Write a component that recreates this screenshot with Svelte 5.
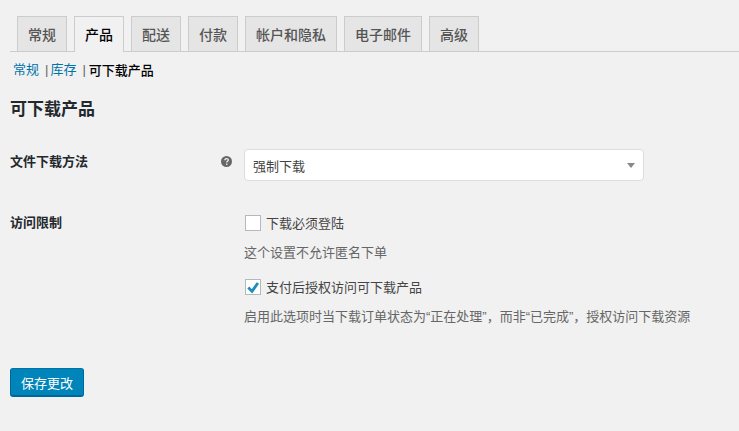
<script lang="ts">
    const tabs = ["常规", "产品", "配送", "付款", "帐户和隐私", "电子邮件", "高级"];
    const active = "产品";

    let requireLogin = $state(false);
    let grantAfterPayment = $state(true);
</script>

<div class="wrap">
    <nav class="tabs">
        {#each tabs as tab}
            <span class="tab" class:active={tab === active}>{tab}</span>
        {/each}
    </nav>

    <ul class="subsub">
        <li><span class="link">常规</span><span class="sep">|</span></li>
        <li><span class="link">库存</span><span class="sep">|</span></li>
        <li class="current">可下载产品</li>
    </ul>

    <h2>可下载产品</h2>

    <div class="row method">
        <div class="label">文件下载方法</div>
        <div class="tip">
            <svg width="11" height="11" viewBox="0 0 11 11">
                <circle cx="5.5" cy="5.5" r="5.5" fill="#666" />
                <path d="M3.8 4.2c0-1 .8-1.6 1.8-1.6s1.7.6 1.7 1.5c0 1.2-1.6 1.2-1.6 2.3" fill="none" stroke="#f1f1f1" stroke-width="1.3" />
                <rect x="5" y="7.5" width="1.4" height="1.4" fill="#f1f1f1" />
            </svg>
        </div>
        <div class="select">
            <span>强制下载</span>
            <i class="arrow"></i>
        </div>
    </div>

    <div class="row access">
        <div class="label">访问限制</div>
        <div class="tip"></div>
        <div class="options">
            <label class="check">
                <input type="checkbox" bind:checked={requireLogin} />
                <span class="box">
                    {#if requireLogin}
                        <svg width="14" height="14" viewBox="0 0 14 14"><path d="M2.3 7.6l3.7 3.8 5.9-8.4" fill="none" stroke="#1e8cbe" stroke-width="2.8" /></svg>
                    {/if}
                </span>
                <span class="text">下载必须登陆</span>
            </label>
            <p class="desc first">这个设置不允许匿名下单</p>
            <label class="check second">
                <input type="checkbox" bind:checked={grantAfterPayment} />
                <span class="box">
                    {#if grantAfterPayment}
                        <svg width="14" height="14" viewBox="0 0 14 14"><path d="M2.3 7.6l3.7 3.8 5.9-8.4" fill="none" stroke="#1e8cbe" stroke-width="2.8" /></svg>
                    {/if}
                </span>
                <span class="text">支付后授权访问可下载产品</span>
            </label>
            <p class="desc last">启用此选项时当下载订单状态为“正在处理”，而非“已完成”，授权访问下载资源</p>
        </div>
    </div>

    <button class="save">保存更改</button>
</div>

<style>
    :global(body) {
        background: #f1f1f1;
        font-family: "Liberation Sans", "Noto Sans CJK SC", sans-serif;
        font-size: 13px;
        color: #444;
    }
    .wrap {
        height: 431px;
        padding: 16px 0 0 10px;
        box-sizing: border-box;
        overflow: hidden;
    }
    .tabs {
        display: flex;
        gap: 7px;
        height: 35px;
        padding-left: 7px;
        border-bottom: 1px solid #ccc;
    }
    .tab {
        height: 35px;
        box-sizing: border-box;
        padding: 0 10px;
        border: 1px solid #ccc;
        border-bottom: 0;
        background: #e5e5e5;
        color: #555;
        font-size: 14px;
        font-weight: 500;
        font-family: "Noto Sans CJK SC", sans-serif;
        line-height: 34px;
    }
    .tab.active {
        height: 36px;
        background: #f1f1f1;
        color: #000;
    }
    .subsub {
        display: flex;
        list-style: none;
        margin: 8px 0 0 3px;
        padding: 0;
        height: 20px;
        line-height: 20px;
    }
    .link {
        color: #0073aa;
    }
    .sep {
        color: #666;
        margin: 0 2px 0 6px;
    }
    .current {
        margin-left: 1px;
        color: #000;
        font-family: "Noto Sans CJK SC", sans-serif;
        font-weight: 500;
    }
    h2 {
        margin: 19px 0 0;
        font-size: 17px;
        font-weight: 700;
        line-height: 22px;
        color: #23282d;
    }
    .row {
        display: flex;
    }
    .method {
        margin-top: 28px;
    }
    .access {
        margin-top: 32px;
    }
    .label {
        width: 210px;
        font-weight: 700;
        color: #23282d;
        line-height: 20px;
    }
    .method .label {
        padding-top: 3px;
    }
    .tip {
        width: 24px;
        display: flex;
        padding: 7px 0 0 1px;
        box-sizing: border-box;
    }
    .select {
        width: 400px;
        height: 32px;
        box-sizing: border-box;
        display: flex;
        align-items: center;
        justify-content: space-between;
        padding: 0 8px 0 8px;
        background: #fff;
        border: 1px solid #ddd;
        border-radius: 4px;
    }
    .arrow {
        width: 0;
        height: 0;
        border-style: solid;
        border-width: 5px 4px 0;
        border-color: #888 transparent transparent;
    }
    .options {
        display: flex;
        flex-direction: column;
        align-items: flex-start;
    }
    .check {
        display: flex;
        align-items: center;
        gap: 5px;
        height: 20px;
        margin-left: 1px;
    }
    .check input {
        position: absolute;
        opacity: 0;
        width: 16px;
        height: 16px;
        margin: 0;
    }
    .box {
        width: 16px;
        height: 16px;
        box-sizing: border-box;
        display: flex;
        align-items: center;
        justify-content: center;
        background: #fff;
        border: 1px solid #b4b9be;
    }
    .text {
        margin-top: -2px;
    }
    .desc {
        margin: 0;
        color: #666;
        line-height: 20px;
    }
    .desc.first {
        margin-top: 10px;
    }
    .second {
        margin-top: 14px;
    }
    .desc.last {
        margin-top: 10px;
    }
    .save {
        display: block;
        margin-top: 41px;
        width: 74px;
        height: 29px;
        padding: 0;
        box-sizing: border-box;
        font: inherit;
        color: #fff;
        background: #0085ba;
        border: 1px solid #0073aa;
        border-bottom-width: 2px;
        border-color: #0073aa #006799 #006799;
        border-radius: 3px;
    }
</style>
